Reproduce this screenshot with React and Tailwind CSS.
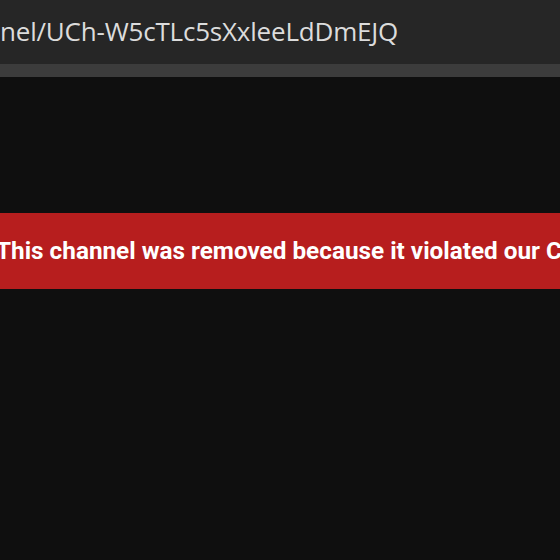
export default function App() {
  return (
    <div className="w-[560px] h-[560px] overflow-hidden bg-[#0f0f0f] flex flex-col">
      {/* address bar */}
      <div className="h-[64px] bg-[#262626] flex items-center overflow-hidden">
        <span className="whitespace-nowrap text-[26px] text-[#dcdcdc] tracking-[-0.2px] -mt-[2px] font-['Open_Sans',sans-serif]">
          nel/UCh-W5cTLc5sXxleeLdDmEJQ
        </span>
      </div>
      <div className="h-[13px] bg-[#3c3c3c]" />

      <div className="flex-1 flex flex-col">
        <div className="h-[136px]" />
        {/* removed notice */}
        <div className="h-[76px] bg-[#b71e1e] flex items-center overflow-hidden">
          <span className="whitespace-nowrap -ml-[4px] text-white font-bold text-[24.3px] font-['Roboto',sans-serif]">
            This channel was removed because it violated our Community Guidelines.
          </span>
        </div>
      </div>
    </div>
  );
}
